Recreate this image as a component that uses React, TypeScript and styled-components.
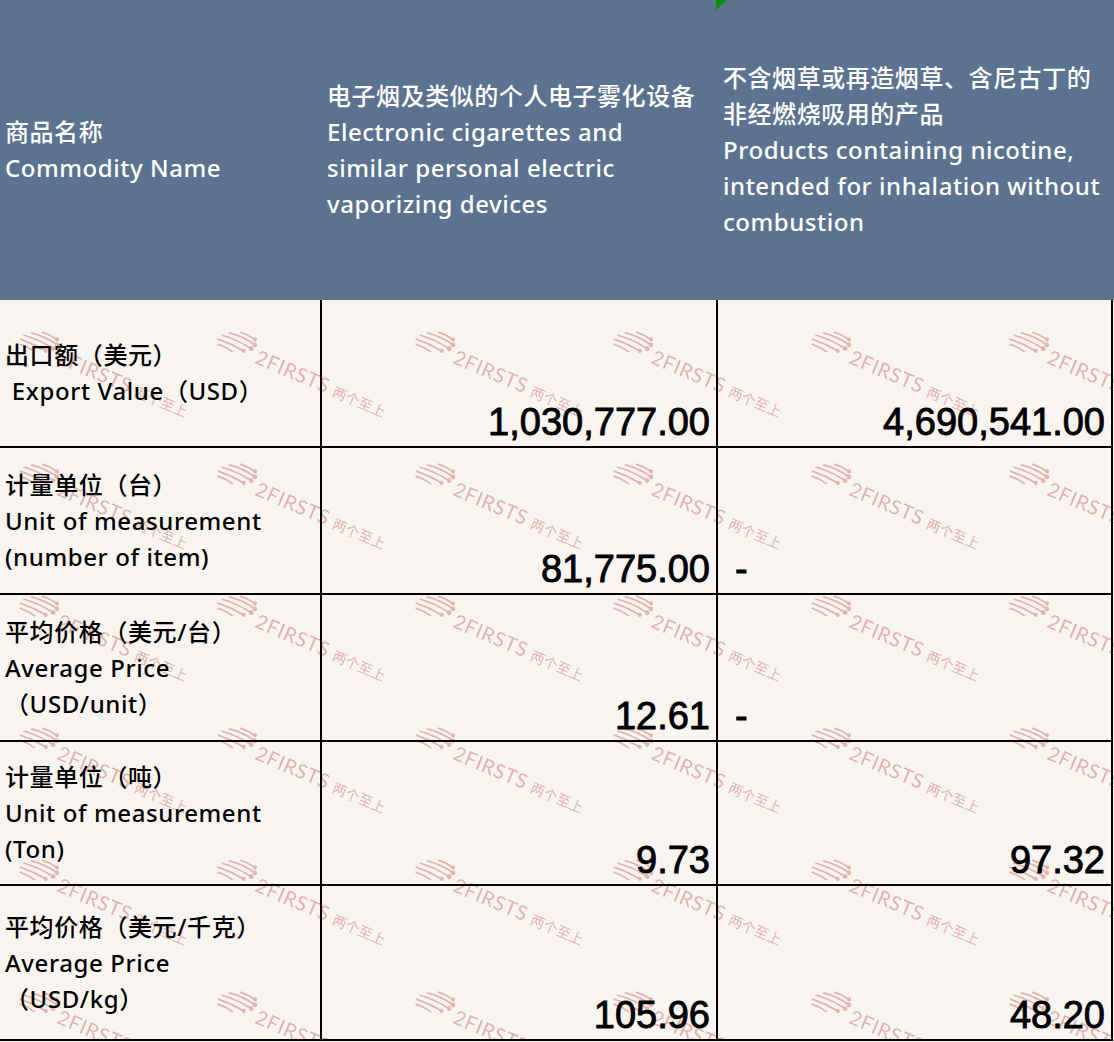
import styled, { createGlobalStyle } from "styled-components";

const GlobalStyle = createGlobalStyle`
  html, body {
    margin: 0;
    padding: 0;
    background: #f8f5f0;
  }
  body {
    font-family: "Noto Sans", "Noto Sans CJK SC", sans-serif;
  }
`;

interface RowData {
  label: string[];
  height: number;
  first: string;
  second: string;
}

const rows: RowData[] = [
  {
    label: ["出口额（美元）", " Export Value（USD）"],
    height: 148,
    first: "1,030,777.00",
    second: "4,690,541.00",
  },
  {
    label: ["计量单位（台）", "Unit of measurement", "(number of item)"],
    height: 147,
    first: "81,775.00",
    second: "-",
  },
  {
    label: ["平均价格（美元/台）", "Average Price", "（USD/unit）"],
    height: 147,
    first: "12.61",
    second: "-",
  },
  {
    label: ["计量单位（吨）", "Unit of measurement", "(Ton)"],
    height: 144,
    first: "9.73",
    second: "97.32",
  },
  {
    label: ["平均价格（美元/千克）", "Average Price", "（USD/kg）"],
    height: 155,
    first: "105.96",
    second: "48.20",
  },
];

const headers: string[][] = [
  ["商品名称", "Commodity Name"],
  [
    "电子烟及类似的个人电子雾化设备",
    "Electronic cigarettes and",
    "similar personal electric",
    "vaporizing devices",
  ],
  [
    "不含烟草或再造烟草、含尼古丁的",
    "非经燃烧吸用的产品",
    "Products containing nicotine,",
    "intended for inhalation without",
    "combustion",
  ],
];

const markColor = "#e2b2ad";

const Watermark = () => (
  <WatermarkSvg aria-hidden="true">
    <defs>
      <pattern
        id="wm-tile"
        x={12}
        y={18}
        width={198}
        height={132}
        patternUnits="userSpaceOnUse"
      >
        <g transform="translate(10 12) rotate(23 0 0)" fill={markColor}>
          {/* logo: stacked strokes ending in dots */}
          <g stroke={markColor} strokeWidth={1.8} strokeLinecap="round" fill="none">
            <path d="M20 -6 Q28 -7 36 -5" />
            <path d="M10 -1 Q24 -3 38 0" />
            <path d="M4 4 Q20 2 36 5" />
            <path d="M2 9 Q16 8 30 10" />
            <path d="M4 14 Q12 13 20 15" />
          </g>
          <circle cx={36} cy={-5} r={2} />
          <circle cx={38} cy={0} r={2.3} />
          <circle cx={36} cy={5} r={2.3} />
          <circle cx={30} cy={10} r={2} />
          <text
            x={44}
            y={17}
            fontFamily="Lato, 'Liberation Sans', sans-serif"
            fontWeight={400}
            fontSize={20}
            letterSpacing={0.6}
          >
            2FIRSTS
          </text>
          <text
            x={128}
            y={17}
            fontFamily="'Noto Sans CJK SC', sans-serif"
            fontWeight={400}
            fontSize={14}
          >
            两个至上
          </text>
        </g>
      </pattern>
    </defs>
    <rect width="100%" height="100%" fill="url(#wm-tile)" />
  </WatermarkSvg>
);

export default function App() {
  return (
    <>
      <GlobalStyle />
      <Table>
        <HeaderRow>
          {headers.map((lines, i) => (
            <HeadCell key={i}>
              {i === 2 && <CommentMark />}
              {lines.map((l) => (
                <Line key={l}>{l}</Line>
              ))}
            </HeadCell>
          ))}
        </HeaderRow>
        <Body>
          <Watermark />
          {rows.map((r) => (
            <BodyRow key={r.label[0]} rowHeight={r.height}>
              <LabelCell>
                {r.label.map((l) => (
                  <Line key={l}>{l}</Line>
                ))}
              </LabelCell>
              <ValueCell alignStart={r.first === "-"}>
                <Value>{r.first}</Value>
              </ValueCell>
              <ValueCell alignStart={r.second === "-"}>
                <Value>{r.second}</Value>
              </ValueCell>
            </BodyRow>
          ))}
        </Body>
      </Table>
    </>
  );
}

const columns = "322px 396px 395px";

const Table = styled.div`
  width: 1114px;
  background: #f8f5f0;
`;

const HeaderRow = styled.div`
  display: grid;
  grid-template-columns: ${columns};
  height: 300px;
  background: #5b7390;
  color: #ffffff;
`;

const HeadCell = styled.div`
  position: relative;
  display: flex;
  flex-direction: column;
  justify-content: center;
  padding-left: 5px;
  font-size: 24px;
  font-weight: 500;
  letter-spacing: 0.55px;
`;

const CommentMark = styled.span`
  position: absolute;
  top: 0;
  left: -2px;
  width: 0;
  height: 0;
  border-top: 10px solid #11880f;
  border-right: 11px solid transparent;
`;

const Line = styled.span`
  display: block;
  white-space: pre;
  line-height: 36px;
`;

const Body = styled.div`
  position: relative;
`;

const WatermarkSvg = styled.svg`
  position: absolute;
  inset: 0;
  width: 100%;
  height: 100%;
  pointer-events: none;
  z-index: 0;
`;

const BodyRow = styled.div<{ rowHeight: number }>`
  position: relative;
  z-index: 1;
  display: grid;
  grid-template-columns: ${columns};
  height: ${({ rowHeight }) => rowHeight}px;
  color: #000000;
`;

const LabelCell = styled.div`
  display: flex;
  flex-direction: column;
  justify-content: center;
  padding-left: 5px;
  border-right: 2px solid #000;
  border-bottom: 2px solid #000;
  font-size: 24px;
  font-weight: 500;
  letter-spacing: 0.6px;
`;

const ValueCell = styled.div<{ alignStart?: boolean }>`
  display: flex;
  align-items: flex-end;
  justify-content: ${({ alignStart }) => (alignStart ? "flex-start" : "flex-end")};
  padding: 0 6px 5px ${({ alignStart }) => (alignStart ? "17px" : "0")};
  border-right: 2px solid #000;
  border-bottom: 2px solid #000;
`;

const Value = styled.span`
  font-family: "Liberation Sans", Arial, sans-serif;
  font-weight: 400;
  font-size: 38px;
  line-height: 1;
  -webkit-text-stroke: 0.9px #000;
`;
